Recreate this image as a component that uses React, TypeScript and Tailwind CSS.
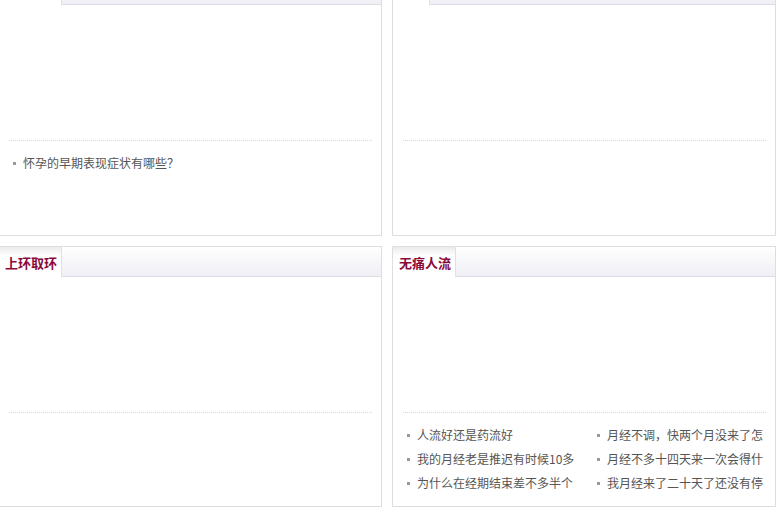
type Panel = {
  id: string;
  title: string;
  tabW: string;
  items: string[];
  twoCols?: boolean;
};

// the top two boxes are scrolled past their headers, so their tab labels are out of view
const panels: Panel[] = [
  { id: "a", title: "", tabW: "w-[63px]", items: ["怀孕的早期表现症状有哪些？"] },
  { id: "b", title: "", tabW: "w-[37px]", items: [] },
  { id: "c", title: "上环取环", tabW: "w-[63px]", items: [] },
  {
    id: "d",
    title: "无痛人流",
    tabW: "w-[63px]",
    twoCols: true,
    items: [
      "人流好还是药流好",
      "月经不调，快两个月没来了怎",
      "我的月经老是推迟有时候10多",
      "月经不多十四天来一次会得什",
      "为什么在经期结束差不多半个",
      "我月经来了二十天了还没有停",
    ],
  },
];

function Box({ panel }: { panel: Panel }) {
  return (
    <div className="border border-[#dedede] bg-white overflow-hidden">
      {/* header with tab */}
      <div className="flex h-[30px]">
        <div
          className={`${panel.tabW} shrink-0 pl-[6px] border-r border-[#e0e0e6] bg-[linear-gradient(#ebebeb,#ffffff_30%,#ffffff)] text-[13px] font-bold leading-[32px] text-[#8a0a3c] whitespace-nowrap`}
        >
          {panel.title}
        </div>
        <div className="flex-1 border-b border-[#dcdce4] bg-gradient-to-b from-white to-[#efeff5]" />
      </div>

      {/* picture area, empty */}
      <div className="h-[135px]" />

      <div className="ml-[10px] mr-[9px] border-t border-dotted border-[#d8d8d8]" />

      <ul
        className={
          panel.twoCols
            ? "grid grid-cols-[190px_190px] pt-[10px] pl-[14px]"
            : "pt-[10px] pl-[14px]"
        }
      >
        {panel.items.map((t) => (
          <li key={t} className="flex items-center h-[24px]">
            <span className="w-[3px] h-[3px] bg-[#999999] mr-[7px] shrink-0" />
            <span className="whitespace-nowrap text-[12px] leading-[24px] text-[#555555]">
              {t}
            </span>
          </li>
        ))}
      </ul>
    </div>
  );
}

export default function App() {
  return (
    <div className="w-[778px] h-[511px] overflow-hidden bg-white font-['Noto_Sans_CJK_SC','Noto_Sans',sans-serif]">
      <div className="-ml-[2px] -mt-[26px] grid grid-cols-[384px_384px] grid-rows-[262px_261px] gap-x-[10px] gap-y-[10px]">
        {panels.map((p) => (
          <Box key={p.id} panel={p} />
        ))}
      </div>
    </div>
  );
}
